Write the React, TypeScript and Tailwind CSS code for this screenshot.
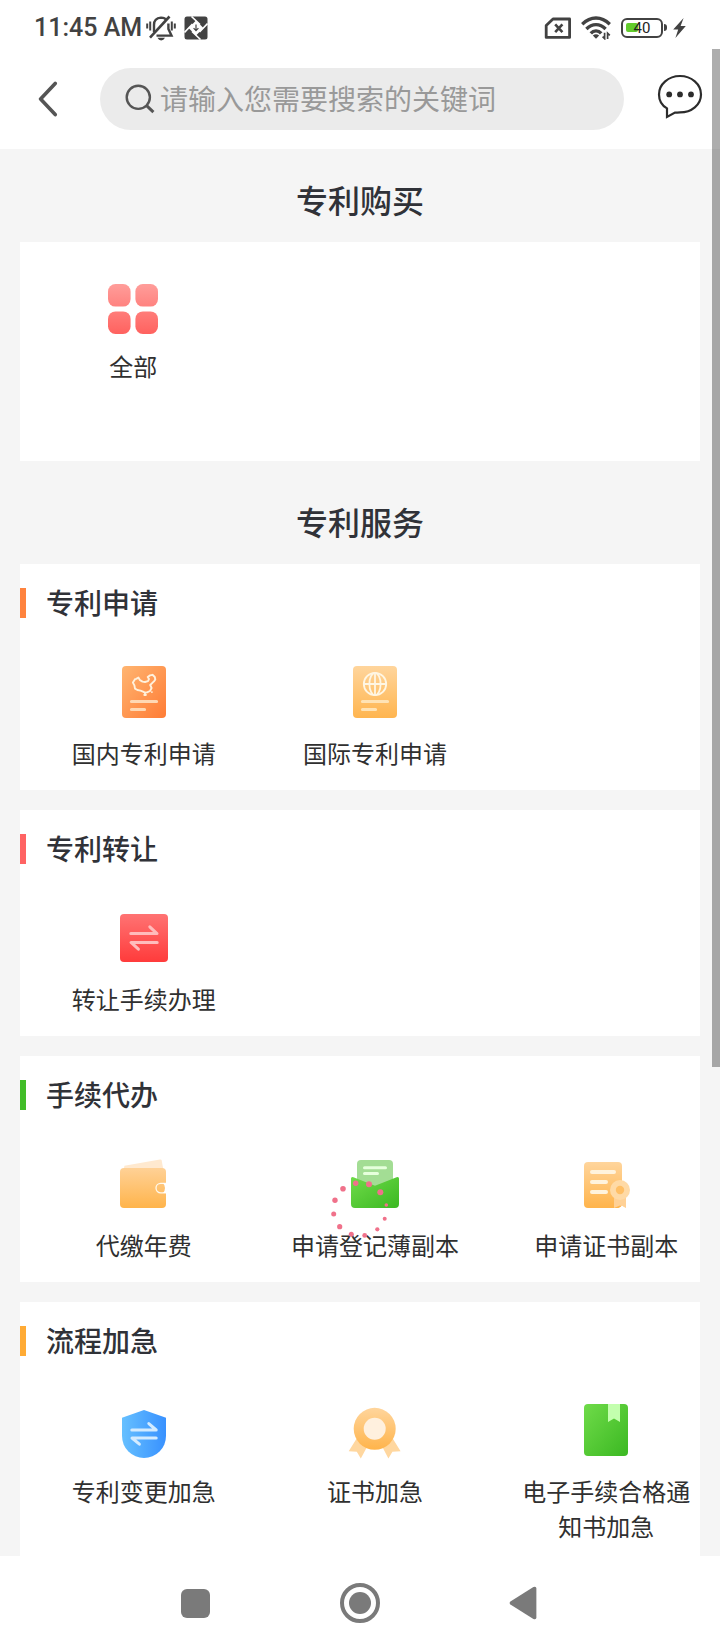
import type { ReactNode } from "react";

const svgProps = { viewBox: "0 0 60 60", className: "h-[60px] w-[60px] shrink-0", "aria-hidden": true } as const;

function Gradient({ id, from, to, diagonal, across }: { id: string; from: string; to: string; diagonal?: boolean; across?: boolean }) {
  return (
    <linearGradient id={id} x1="0" y1="0" x2={diagonal || across ? "1" : "0"} y2={across ? "0" : "1"}>
      <stop offset="0" stopColor={from} />
      <stop offset="1" stopColor={to} />
    </linearGradient>
  );
}

function AllIcon() {
  return (
    <svg {...svgProps}>
      <linearGradient id="all" gradientUnits="userSpaceOnUse" x1="0" y1="5" x2="0" y2="55">
        <stop offset="0" stopColor="#ff9d9a" />
        <stop offset="1" stopColor="#ff625f" />
      </linearGradient>
      <g fill="url(#all)">
        <rect x="5" y="5" width="22.6" height="22.6" rx="7.5" />
        <rect x="32.4" y="5" width="22.6" height="22.6" rx="7.5" />
        <rect x="5" y="32.4" width="22.6" height="22.6" rx="7.5" />
        <rect x="32.4" y="32.4" width="22.6" height="22.6" rx="7.5" />
      </g>
    </svg>
  );
}

function DomesticIcon() {
  return (
    <svg {...svgProps}>
      <Gradient id="domestic" from="#ffb571" to="#ff7c35" diagonal />
      <rect x="8" y="4" width="44" height="52" rx="4" fill="url(#domestic)" />
      <path d="M17.4 39.5H42.6M17.4 47.5H30.6" stroke="#ffd8b3" strokeWidth="3" strokeLinecap="round" />
      <path
        d="M18.9 20.6 21 17.2 22.2 16.8 24.4 15.6 26 18.2 28.5 19.6 31 20 34 19.2 35 17 33.7 15 36 13.4 38.5 12.8 40.8 15 41.3 17.5 40 19.4 38.4 20.8 36.2 23 37.6 26 36 29 33.5 30.2 31 30.6 29 29.6 26.5 28.6 23.4 28 21 26.6 20.4 23.4Z"
        fill="none" stroke="#fff1dc" strokeWidth="1.9" strokeLinejoin="round"
      />
      <path d="M29.5 32.8H32.7M31 30.6V34M37.2 30.2H38.6" stroke="#fff1dc" strokeWidth="1.8" />
    </svg>
  );
}

function InternationalIcon() {
  return (
    <svg {...svgProps}>
      <Gradient id="international" from="#ffd59c" to="#ffb54f" />
      <rect x="8" y="4" width="44" height="52" rx="4" fill="url(#international)" />
      <path d="M17.4 39.5H42.6M17.4 47.5H30.6" stroke="#ffe3b5" strokeWidth="3" strokeLinecap="round" />
      <g fill="none" stroke="#fff6e3" strokeWidth="1.8">
        <circle cx="30" cy="22" r="11.2" />
        <ellipse cx="30" cy="22" rx="5.6" ry="11.2" />
        <path d="M30 10.8V33.2M18.8 22H41.2" />
      </g>
    </svg>
  );
}

function TransferIcon() {
  return (
    <svg {...svgProps}>
      <Gradient id="transfer" from="#ff7373" to="#ff3b3b" />
      <rect x="6" y="6" width="48" height="48" rx="4" fill="url(#transfer)" />
      <path d="M16.8 25.6H43L35.8 18.8M43.2 34.4H17L24.4 41.2" fill="none" stroke="#ffbcbc" strokeWidth="3" strokeLinecap="round" strokeLinejoin="round" />
    </svg>
  );
}

function WalletIcon() {
  return (
    <svg {...svgProps}>
      <Gradient id="wallet" from="#ffd196" to="#ffb44b" />
      <path d="M10 14 10.4 11.8 46 5.4Q47.4 5.2 47.7 6.6L49.2 15H10Z" fill="#ffe9cf" />
      <rect x="6" y="14" width="46" height="40" rx="4" fill="url(#wallet)" />
      <path d="M52 29.4H46.7A4.7 4.7 0 0 0 46.7 38.8H52" fill="none" stroke="#fff8ec" strokeWidth="1.3" />
      <path d="M49 29.3H52.4V38.9H49Q51 37 51 34T49 29.3Z" fill="#fff" />
    </svg>
  );
}

function EnvelopeIcon() {
  return (
    <svg {...svgProps}>
      <Gradient id="envelope" from="#6fdb49" to="#3bb822" diagonal />
      <rect x="12" y="6" width="36" height="36" rx="4" fill="#a3dd94" />
      <path d="M19.5 13.7H40.5M19.5 19.5H32.5" stroke="#e6ffdc" strokeWidth="3" strokeLinecap="round" />
      <path d="M6 24.6Q6 22.4 8.4 23.2L30 31.8 51.6 23.2Q54 22.4 54 24.6V50Q54 54 50 54H10Q6 54 6 50Z" fill="url(#envelope)" />
    </svg>
  );
}

function CertificateIcon() {
  return (
    <svg {...svgProps}>
      <Gradient id="certificate" from="#ffd59c" to="#ffb44b" />
      <rect x="8" y="8" width="38" height="46" rx="4" fill="url(#certificate)" />
      <path d="M16 18H38M16 28H30M16 38H30" stroke="#fff3dd" strokeWidth="4" strokeLinecap="round" />
      <path d="M38 42H50V54L44 51.5 38 54Z" fill="#ffd196" />
      <path d="M43 54 46.2 51.8 49 54Z" fill="#fff" />
      <circle cx="44" cy="36" r="10" fill="#ffdaa6" />
      <circle cx="44" cy="36" r="4.2" fill="#ffbf66" />
    </svg>
  );
}

function ShieldIcon() {
  return (
    <svg {...svgProps}>
      <Gradient id="shield" from="#66c0ff" to="#3891ff" across />
      <path d="M30 10 52 17.8V36A22 22 0 0 1 8 36V17.8Z" fill="url(#shield)" />
      <path d="M17.8 30H42.2L34.8 23.6M42.2 38H18L25.4 44.2" fill="none" stroke="#d3ebff" strokeWidth="3" strokeLinecap="round" strokeLinejoin="round" />
    </svg>
  );
}

function MedalIcon() {
  return (
    <svg {...svgProps}>
      <Gradient id="medal" from="#ffd59c" to="#ffb44b" />
      <path d="M12 38 3.7 51.2 11.8 51.8 15.8 58.4 22 47ZM47.4 38 55.6 51.2 47.4 51.8 43.4 58.4 37.4 47Z" fill="#ffd79f" />
      <circle cx="29.7" cy="28.8" r="21" fill="url(#medal)" />
      <circle cx="29.7" cy="28.8" r="11" fill="#fff0de" />
    </svg>
  );
}

function BookIcon() {
  return (
    <svg {...svgProps}>
      <Gradient id="book" from="#6fdb49" to="#3bb822" diagonal />
      <rect x="8" y="4" width="44" height="52" rx="4" fill="url(#book)" />
      <path d="M32 4H44V22L38 18.4 32 22Z" fill="#c3ffae" />
    </svg>
  );
}

type Entry = { label: string; icon: ReactNode };

const sections: { title: string; accent: string; entries: Entry[] }[] = [
  {
    title: "专利申请",
    accent: "bg-[#ff833e]",
    entries: [
      { label: "国内专利申请", icon: <DomesticIcon /> },
      { label: "国际专利申请", icon: <InternationalIcon /> },
    ],
  },
  { title: "专利转让", accent: "bg-[#ff6363]", entries: [{ label: "转让手续办理", icon: <TransferIcon /> }] },
  {
    title: "手续代办",
    accent: "bg-[#42bd28]",
    entries: [
      { label: "代缴年费", icon: <WalletIcon /> },
      { label: "申请登记薄副本", icon: <EnvelopeIcon /> },
      { label: "申请证书副本", icon: <CertificateIcon /> },
    ],
  },
  {
    title: "流程加急",
    accent: "bg-[#ffab35]",
    entries: [
      { label: "专利变更加急", icon: <ShieldIcon /> },
      { label: "证书加急", icon: <MedalIcon /> },
      { label: "电子手续合格通知书加急", icon: <BookIcon /> },
    ],
  },
];

function EntryButton({ label, icon }: Entry) {
  return (
    <button type="button" className="flex flex-col items-center gap-[13px] text-2xl/[35px] text-[#303030]">
      {icon}
      <span>{label}</span>
    </button>
  );
}

function PageTitle({ children }: { children: ReactNode }) {
  return <h1 className="pb-[19px] text-center text-[32px]/[48px] font-medium text-[#303238]">{children}</h1>;
}

function StatusBar() {
  return (
    <div className="flex h-[49px] shrink-0 items-center pt-1.5 pr-[34px] pl-[34px] text-[#424242]">
      <span className="font-[Roboto,sans-serif] text-[25px]/[30px] font-medium">11:45 AM</span>
      <svg viewBox="0 0 30 26" className="ml-1 h-[26px] w-[30px]" fill="none" stroke="currentColor" strokeWidth="2" aria-hidden="true">
        <path d="M1.2 8.5V13.5M4.2 6.5V15.5M28.8 8.5V13.5M25.8 6.5V15.5" />
        <path d="M8 17V10Q8 3 15 2.6 19 2.8 20.5 5M22.4 8.5V14L25.5 20.6H10.5" strokeWidth="2.4" />
        <path d="M4 22.6 23.5 1.5" strokeWidth="2.6" />
        <path d="M11.4 22.8H19Q17.6 25.4 15.2 25.4T11.4 22.8Z" fill="currentColor" stroke="none" />
      </svg>
      <svg viewBox="0 0 24 24" className="ml-2 h-6 w-6" aria-hidden="true">
        <rect x="0.5" y="0.5" width="23" height="23" rx="2.5" fill="currentColor" />
        <path d="M12 4.6 19.4 12 12 19.4 4.6 12Z" fill="#fff" />
        <path d="M7.5 .5 16 8.5M23.5 7.5 15.5 16M16.5 23.5 8 15.5M.5 16.5 8.5 8" stroke="#fff" strokeWidth="1.6" />
        <path d="M12 8.4V14.4M9.6 12.2 12 14.6 14.4 12.2" fill="none" stroke="currentColor" strokeWidth="1.2" />
      </svg>
      <svg viewBox="0 0 28 22" className="ml-auto h-[22px] w-7" fill="none" stroke="currentColor" aria-hidden="true">
        <path d="M9 2H25.6V20.4H2.2V8.4Z" strokeWidth="2.8" strokeLinejoin="round" />
        <path d="M11.2 7.4 18.4 15.2M18.4 7.4 11.2 15.2" strokeWidth="2.6" />
      </svg>
      <svg viewBox="0 0 30 24" className="ml-[9px] h-6 w-[30px]" fill="none" stroke="currentColor" strokeWidth="3.3" aria-hidden="true">
        <path d="M1.2 8.2Q7.5 2 15 2T28.8 8.2M5.4 13Q9.6 8.6 15 8.6T24.6 13M9.8 17.4Q12 14.8 15 14.8T20.2 17.4" />
        <path d="M11.8 19.6Q15 17 18.2 19.6L15 22.8Z" fill="currentColor" stroke="none" />
        <path d="M23.6 16.8V22.6L21.6 20.6M26.6 23V17.2L28.8 19.4" strokeWidth="1.7" />
      </svg>
      <div className="relative ml-2.5 flex h-5 w-[42px] items-center rounded-[6px] border-2 border-current p-[3px]">
        <span className="h-[9px] w-3 rounded-xs bg-[#62cc2c]" />
        <span className="absolute inset-0 text-center font-[Roboto,sans-serif] text-[15px]/[17px] text-[#222]">40</span>
      </div>
      <span className="ml-px h-[7px] w-[3px] rounded-r-sm bg-current" />
      <svg viewBox="0 0 13 20" className="ml-[6px] h-5 w-[13px]" fill="currentColor" aria-hidden="true">
        <path d="M10.6 0 .2 11.6H5.2L2.4 20 12.8 8H7.6Z" />
      </svg>
    </div>
  );
}

function Header() {
  return (
    <header className="flex h-[100px] shrink-0 items-center pr-[17px] pl-[35px]">
      <button type="button" aria-label="返回" className="flex h-12 w-[26px] items-center justify-center">
        <svg viewBox="0 0 20 36" className="h-9 w-5" fill="none" stroke="#555" strokeWidth="3.6" strokeLinecap="round" strokeLinejoin="round">
          <path d="M17.2 2.4 2.6 18 17.2 33.6" />
        </svg>
      </button>
      <label className="ml-[39px] flex h-[62px] min-w-0 flex-1 items-center rounded-full bg-[#ebebeb] px-6">
        <svg viewBox="0 0 32 32" className="h-8 w-8 shrink-0" fill="none" stroke="#555" strokeWidth="2.4" aria-label="搜索">
          <circle cx="14.3" cy="14.3" r="11.6" />
          <path d="M22.6 22.6 29.4 29.2" strokeWidth="3" />
        </svg>
        <input
          type="search"
          placeholder="请输入您需要搜索的关键词"
          className="ml-1 h-full min-w-0 flex-1 bg-transparent pb-0.5 text-[28px] text-[#303030] outline-none placeholder:text-[#999]"
        />
      </label>
      <button type="button" aria-label="消息" className="ml-8 flex h-12 w-[47px] items-center justify-center">
        <svg viewBox="0 0 46 46" className="-mt-1 h-[46px] w-[46px]" fill="none" stroke="#2c2c2c" strokeWidth="2.2">
          <path d="M23 2C34.5 2 44 10 44 20.4S34.5 38.4 23 38.4Q20 38.6 18 38.6L10 43V34.4C5 31.4 2 26.4 2 20.4 2 10 11.5 2 23 2Z" />
          <g fill="#2c2c2c" stroke="none">
            <circle cx="12.2" cy="20.4" r="2.9" />
            <circle cx="23" cy="20.4" r="2.9" />
            <circle cx="34" cy="20.4" r="2.9" />
          </g>
        </svg>
      </button>
    </header>
  );
}

const dots = [
  [355.7, 1183.3, 2.7], [369, 1184.3, 3], [380.3, 1192.3, 3], [386.3, 1205, 1.8],
  [384.7, 1218.7, 2], [377.3, 1229.3, 2.1], [364.7, 1235.4, 2.4], [351.3, 1234.3, 2.5],
  [339.7, 1226.7, 2.6], [333.7, 1214, 2.5], [335, 1200.3, 2.7], [343, 1188.8, 2.8],
];

export default function App() {
  return (
    <div className="relative flex h-screen flex-col overflow-hidden bg-white font-['Noto_Sans_CJK_SC',sans-serif]">
      <StatusBar />
      <Header />
      <main className="min-h-0 flex-1 overflow-hidden bg-[#f5f5f5] px-5 pt-[26px]">
        <PageTitle>专利购买</PageTitle>
        <div className="mb-9 grid grid-cols-3 bg-white pt-[37px] pb-[78px]">
          <button type="button" className="flex flex-col items-center gap-[9px] text-2xl/[35px] text-[#303030]">
            <AllIcon />
            <span>全部</span>
          </button>
        </div>
        <PageTitle>专利服务</PageTitle>
        <div className="flex flex-col gap-5">
          {sections.map((section) => (
            <section key={section.title} className="bg-white pt-[18px] pb-5">
              <div className="flex h-[42px] items-center gap-5">
                <span className={`h-[30px] w-1.5 ${section.accent}`} />
                <h2 className="pb-0.5 text-[28px]/[40px] font-medium text-[#303238]">{section.title}</h2>
              </div>
              <div className="mt-[38px] grid grid-cols-3 items-start gap-[60px] pr-2 pl-[38px]">
                {section.entries.map((entry) => (
                  <EntryButton key={entry.label} {...entry} />
                ))}
              </div>
            </section>
          ))}
        </div>
      </main>
      <nav className="flex h-[94px] shrink-0 items-center justify-center gap-[125px] bg-white">
        <button type="button" aria-label="最近任务" className="flex h-10 w-10 items-center justify-center">
          <span className="h-[29px] w-[29px] rounded-[6px] bg-[#7a7a7a]" />
        </button>
        <button type="button" aria-label="主屏幕" className="flex h-10 w-10 items-center justify-center rounded-full border-4 border-[#7a7a7a]">
          <span className="h-[22px] w-[22px] rounded-full bg-[#7a7a7a]" />
        </button>
        <button type="button" aria-label="后退" className="flex h-10 w-10 items-center justify-center">
          <svg viewBox="0 0 32 34" className="h-[34px] w-8" fill="#7a7a7a">
            <path d="M1.4 15.6 24.4 1Q27.4 0 27.4 2.4V31.6Q27.4 34 24.4 33L1.4 18.4Q-.2 17 1.4 15.6Z" />
          </svg>
        </button>
      </nav>
      <svg viewBox="328 1178 64 64" className="pointer-events-none absolute top-[1178px] left-1/2 h-16 w-16 -translate-x-1/2" fill="#f0718a" role="img" aria-label="加载中">
        {dots.map(([x, y, r]) => (
          <circle key={`${x}-${y}`} cx={x} cy={y} r={r} />
        ))}
      </svg>
      <div className="absolute top-[49px] right-0 h-[1018px] w-2 bg-black/32" />
    </div>
  );
}
